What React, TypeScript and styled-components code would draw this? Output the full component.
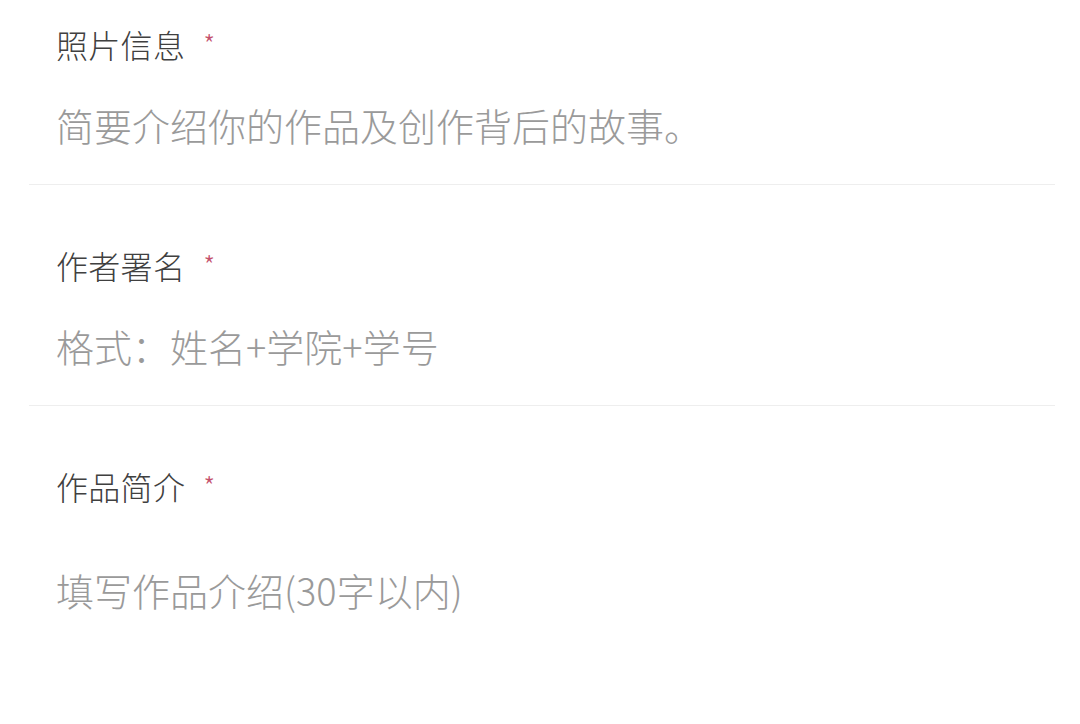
import React from 'react';
import styled, { createGlobalStyle } from 'styled-components';

const GlobalStyle = createGlobalStyle`
  html, body {
    margin: 0;
    padding: 0;
    background: #ffffff;
  }
  body {
    font-family: "Noto Sans CJK SC", "Noto Sans", sans-serif;
    -webkit-font-smoothing: antialiased;
  }
`;

const Form = styled.form`
  width: 1080px;
  height: 724px;
  overflow: hidden;
  padding: 0 25px 0 29px;
  box-sizing: border-box;
`;

const Field = styled.div<{ $last?: boolean }>`
  display: flex;
  flex-direction: column;
  padding: 58px 0 33px 27px;
  border-bottom: ${(p) => (p.$last ? 'none' : '1px solid #eeeeee')};

  &:first-child {
    padding-top: 22px;
  }
`;

const Label = styled.label`
  display: flex;
  align-items: flex-start;
  font-size: 32px;
  font-weight: 300;
  line-height: 44px;
  color: #404040;
  letter-spacing: 0.3px;
`;

const Required = styled.span`
  margin: 7px 0 0 18px;
  font-size: 27px;
  line-height: 30px;
  color: #c4506b;
`;

const TextInput = styled.input`
  margin-top: 33px;
  padding: 0;
  border: none;
  outline: none;
  background: transparent;
  font-family: inherit;
  font-size: 38px;
  font-weight: 300;
  line-height: 52px;
  height: 52px;
  color: #333;

  &::placeholder {
    color: #9a9a9a;
  }
`;

const TextArea = styled.textarea`
  margin-top: 56px;
  padding: 0;
  border: none;
  outline: none;
  resize: none;
  background: transparent;
  font-family: inherit;
  font-size: 38px;
  font-weight: 300;
  line-height: 52px;
  height: 120px;
  color: #333;

  &::placeholder {
    color: #9a9a9a;
  }
`;

interface FieldDef {
  label: string;
  placeholder: string;
  multiline?: boolean;
}

const fields: FieldDef[] = [
  { label: '照片信息', placeholder: '简要介绍你的作品及创作背后的故事。' },
  { label: '作者署名', placeholder: '格式：姓名+学院+学号' },
  { label: '作品简介', placeholder: '填写作品介绍(30字以内)', multiline: true },
];

const App: React.FC = () => {
  return (
    <>
      <GlobalStyle />
      <Form onSubmit={(e) => e.preventDefault()}>
        {fields.map((f, i) => (
          <Field key={f.label} $last={i === fields.length - 1}>
            <Label>
              {f.label}
              <Required>*</Required>
            </Label>
            {f.multiline ? (
              <TextArea placeholder={f.placeholder} />
            ) : (
              <TextInput placeholder={f.placeholder} />
            )}
          </Field>
        ))}
      </Form>
    </>
  );
};

export default App;
